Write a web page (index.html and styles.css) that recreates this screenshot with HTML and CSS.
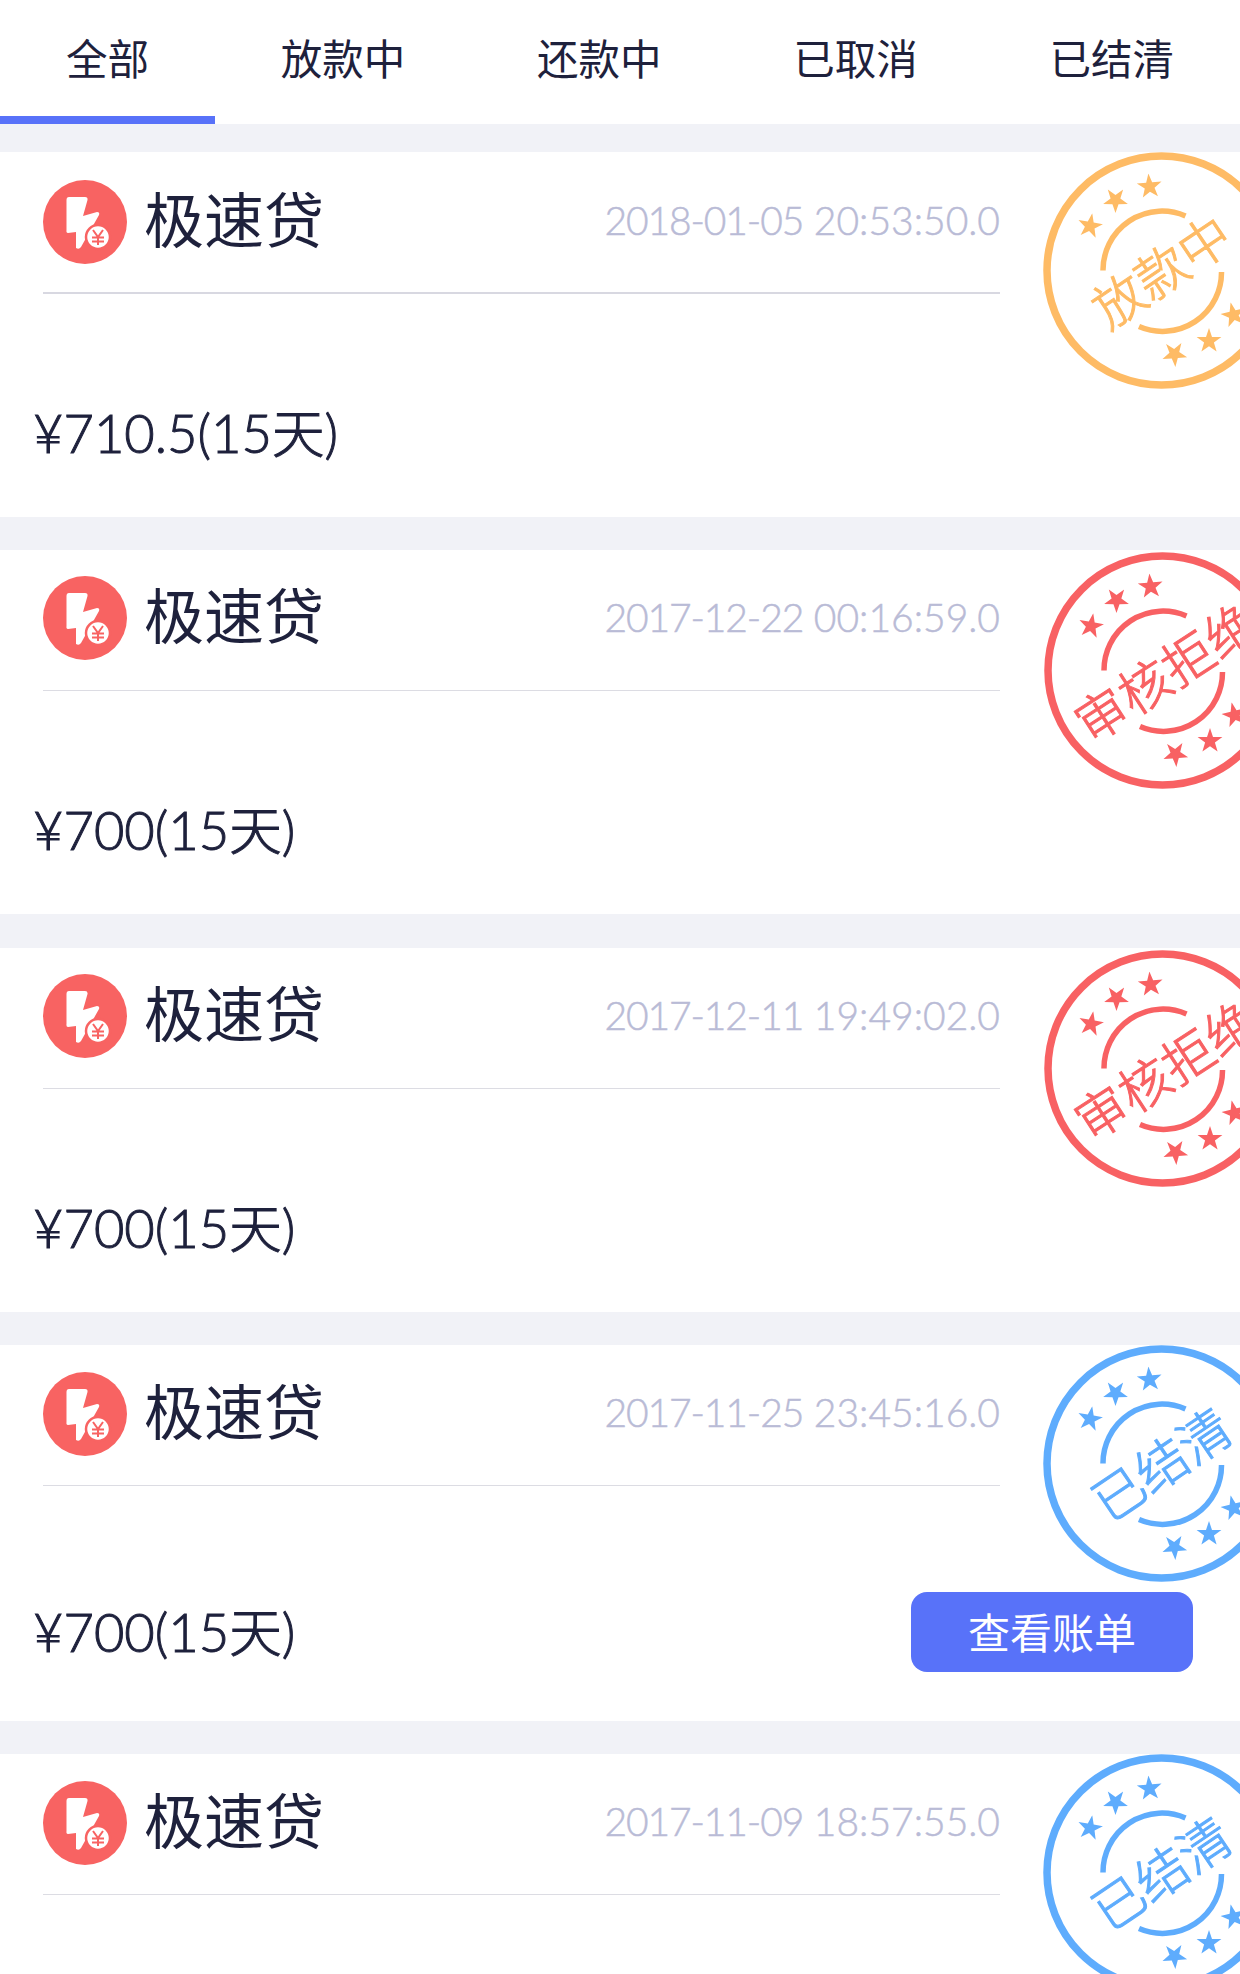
FILE: index.html
```html
<!DOCTYPE html>
<html lang="zh-CN">
<head>
    <meta charset="UTF-8">
    <title>借款记录</title>
    <link rel="stylesheet" href="styles.css">
</head>
<body>
    <!-- 公用图形 -->
    <svg class="defs">
        <symbol id="logo" viewBox="0 0 84 84">
            <circle cx="42" cy="42" r="42" fill="#f86362"/>
            <path d="M26 17H42Q45 17 44.500 20L40 36L54 32Q57 32 56 35L38 67Q36 70 33 68L33 52L25 53Q23 53 23.500 50V20Q23.500 17 26 17Z" fill="#fff"/>
            <circle cx="55" cy="57" r="12" fill="#fff" stroke="#f86362" stroke-width="2.500"/>
            <path d="M50 50L55 57L60 50M49 57.500H61M49 61.500H61M55 57V65" fill="none" stroke="#f86362" stroke-width="2"/>
        </symbol>
        <symbol id="star" viewBox="-13 -13 26 26">
            <path d="M0 -13L3 -4.100L12.400 -4L4.900 1.600L7.600 10.500L0 5.200L-7.600 10.500L-4.900 1.600L-12.400 -4L-3 -4.100Z"/>
        </symbol>
        <symbol id="seal" viewBox="-118.500 -118.500 237 237">
            <circle r="114.500" fill="none" stroke="currentColor" stroke-width="7.500"/>
            <path d="M-58.500 0A59 59 0 0 1 24 -54.500M60 1.500A59 59 0 0 1 -22.500 56" fill="none" stroke="currentColor" stroke-width="5.500"/>
            <g fill="currentColor">
                <use href="#star" x="-13" y="-13" width="26" height="26" transform="translate(-71.500 -44.500) rotate(10)"/>
                <use href="#star" x="-13" y="-13" width="26" height="26" transform="translate(-46 -70.500) rotate(36)"/>
                <use href="#star" x="-13" y="-13" width="26" height="26" transform="translate(-12 -84) rotate(-5)"/>
                <use href="#star" x="-13" y="-13" width="26" height="26" transform="translate(13 83.500) rotate(32)"/>
                <use href="#star" x="-13" y="-13" width="26" height="26" transform="translate(47.500 70.500)"/>
                <use href="#star" x="-13" y="-13" width="26" height="26" transform="translate(72 44.500) rotate(-13)"/>
            </g>
        </symbol>
    </svg>

    <div class="tabs">
        <div class="tab active">全部</div>
        <div class="tab">放款中</div>
        <div class="tab">还款中</div>
        <div class="tab">已取消</div>
        <div class="tab">已结清</div>
    </div>

    <div class="list">
        <div class="card first">
            <div class="head">
                <svg class="logo"><use href="#logo"/></svg>
                <span class="name">极速贷</span>
                <span class="date"><span class="day">2018-01-05</span> 20:53:50.0</span>
            </div>
            <div class="foot"><span class="money">¥710.5(15天)</span></div>
            <div class="stamp orange"><svg><use href="#seal"/></svg><span>放款中</span></div>
        </div>

        <div class="card">
            <div class="head">
                <svg class="logo"><use href="#logo"/></svg>
                <span class="name">极速贷</span>
                <span class="date"><span class="day">2017-12-22</span> 00:16:59.0</span>
            </div>
            <div class="foot"><span class="money">¥700(15天)</span></div>
            <div class="stamp red"><svg><use href="#seal"/></svg><span>审核拒绝</span></div>
        </div>

        <div class="card">
            <div class="head">
                <svg class="logo"><use href="#logo"/></svg>
                <span class="name">极速贷</span>
                <span class="date"><span class="day">2017-12-11</span> 19:49:02.0</span>
            </div>
            <div class="foot"><span class="money">¥700(15天)</span></div>
            <div class="stamp red"><svg><use href="#seal"/></svg><span>审核拒绝</span></div>
        </div>

        <div class="card has-btn">
            <div class="head">
                <svg class="logo"><use href="#logo"/></svg>
                <span class="name">极速贷</span>
                <span class="date"><span class="day">2017-11-25</span> 23:45:16.0</span>
            </div>
            <div class="foot">
                <span class="money">¥700(15天)</span>
                <button class="btn">查看账单</button>
            </div>
            <div class="stamp blue"><svg><use href="#seal"/></svg><span>已结清</span></div>
        </div>

        <div class="card last">
            <div class="head">
                <svg class="logo"><use href="#logo"/></svg>
                <span class="name">极速贷</span>
                <span class="date"><span class="day">2017-11-09</span> 18:57:55.0</span>
            </div>
            <div class="stamp blue"><svg><use href="#seal"/></svg><span>已结清</span></div>
        </div>
    </div>
</body>
</html>
```
FILE: styles.css
```css
* {
    box-sizing: border-box;
}

body {
    display: flex;
    flex-direction: column;
    margin: 0;
    height: 100vh;
    overflow: hidden;
    background-color: #f1f2f7;
    color: #1e213c;
    font-family: Lato, "Noto Sans CJK SC", sans-serif;
}

.defs {
    display: none;
}

.tabs {
    display: flex;
    flex: none;
    height: 124px;
    background-color: #fff;
}

.tab {
    flex: 1 1 auto;
    height: 124px;
    border-bottom: 8px solid transparent;
    font-size: 41.5px;
    line-height: 118px;
    text-align: center;
    white-space: nowrap;
}

.tab.active {
    border-bottom-color: #5872f9;
}

.list {
    display: flex;
    flex: 1;
    flex-direction: column;
    gap: 33.2px;
    min-height: 0;
    padding-top: 28px;
}

.card {
    position: relative;
    flex: none;
    height: 364.6px;
    background-color: #fff;
    overflow: hidden;
}

.card.has-btn {
    height: 375.6px;
}

.card.last {
    flex: 1;
    height: auto;
}

.head {
    display: flex;
    align-items: center;
    width: 957px;
    height: 141px;
    margin-left: 43px;
    padding-bottom: 2px;
    border-bottom: 1px solid #dcdce3;
}

.first .head {
    height: 142px;
    padding-bottom: 0;
    border-bottom: 2px solid #d8d8e1;
}

.logo {
    width: 84px;
    height: 84px;
    margin-top: -1px;
}

.name {
    margin-left: 17px;
    font-size: 60px;
    line-height: 80px;
    margin-top: -5px;
}

.date {
    margin-left: auto;
    margin-top: -4px;
    color: #b9bbd6;
    font-size: 39px;
    font-weight: 300;
    -webkit-text-stroke: 0.5px currentColor;
}

.day {
    letter-spacing: -1.1px;
}

.foot {
    display: flex;
    align-items: center;
    justify-content: space-between;
    height: 80px;
    margin-top: 99px;
    padding: 0 47px 0 33px;
}

.has-btn .foot {
    margin-top: 106px;
}

.money {
    font-size: 52.5px;
    font-weight: 300;
    line-height: 80px;
    -webkit-text-stroke: 1px currentColor;
}

.btn {
    width: 282px;
    height: 80px;
    padding: 0 0 4px;
    border: none;
    border-radius: 16px;
    background-color: #5872f9;
    color: #fff;
    font-family: inherit;
    font-size: 42px;
}

/* 状态印章，右侧超出屏幕 */
.stamp {
    position: absolute;
    top: 0;
    left: 1043px;
    width: 237px;
    height: 237px;
    display: flex;
    align-items: center;
    justify-content: center;
}

.stamp svg {
    position: absolute;
    width: 237px;
    height: 237px;
}

.stamp span {
    font-size: 51.5px;
    font-weight: 300;
    line-height: 60px;
    white-space: nowrap;
    -webkit-text-stroke: 1px currentColor;
    transform: rotate(-34deg);
}

.orange {
    color: #febb65;
}

.stamp.red {
    top: 2px;
    left: 1044px;
    color: #f86163;
}

.red span {
    transform: translate(4px, 2px) rotate(-33deg);
}

.blue {
    color: #5eacfd;
}
```
